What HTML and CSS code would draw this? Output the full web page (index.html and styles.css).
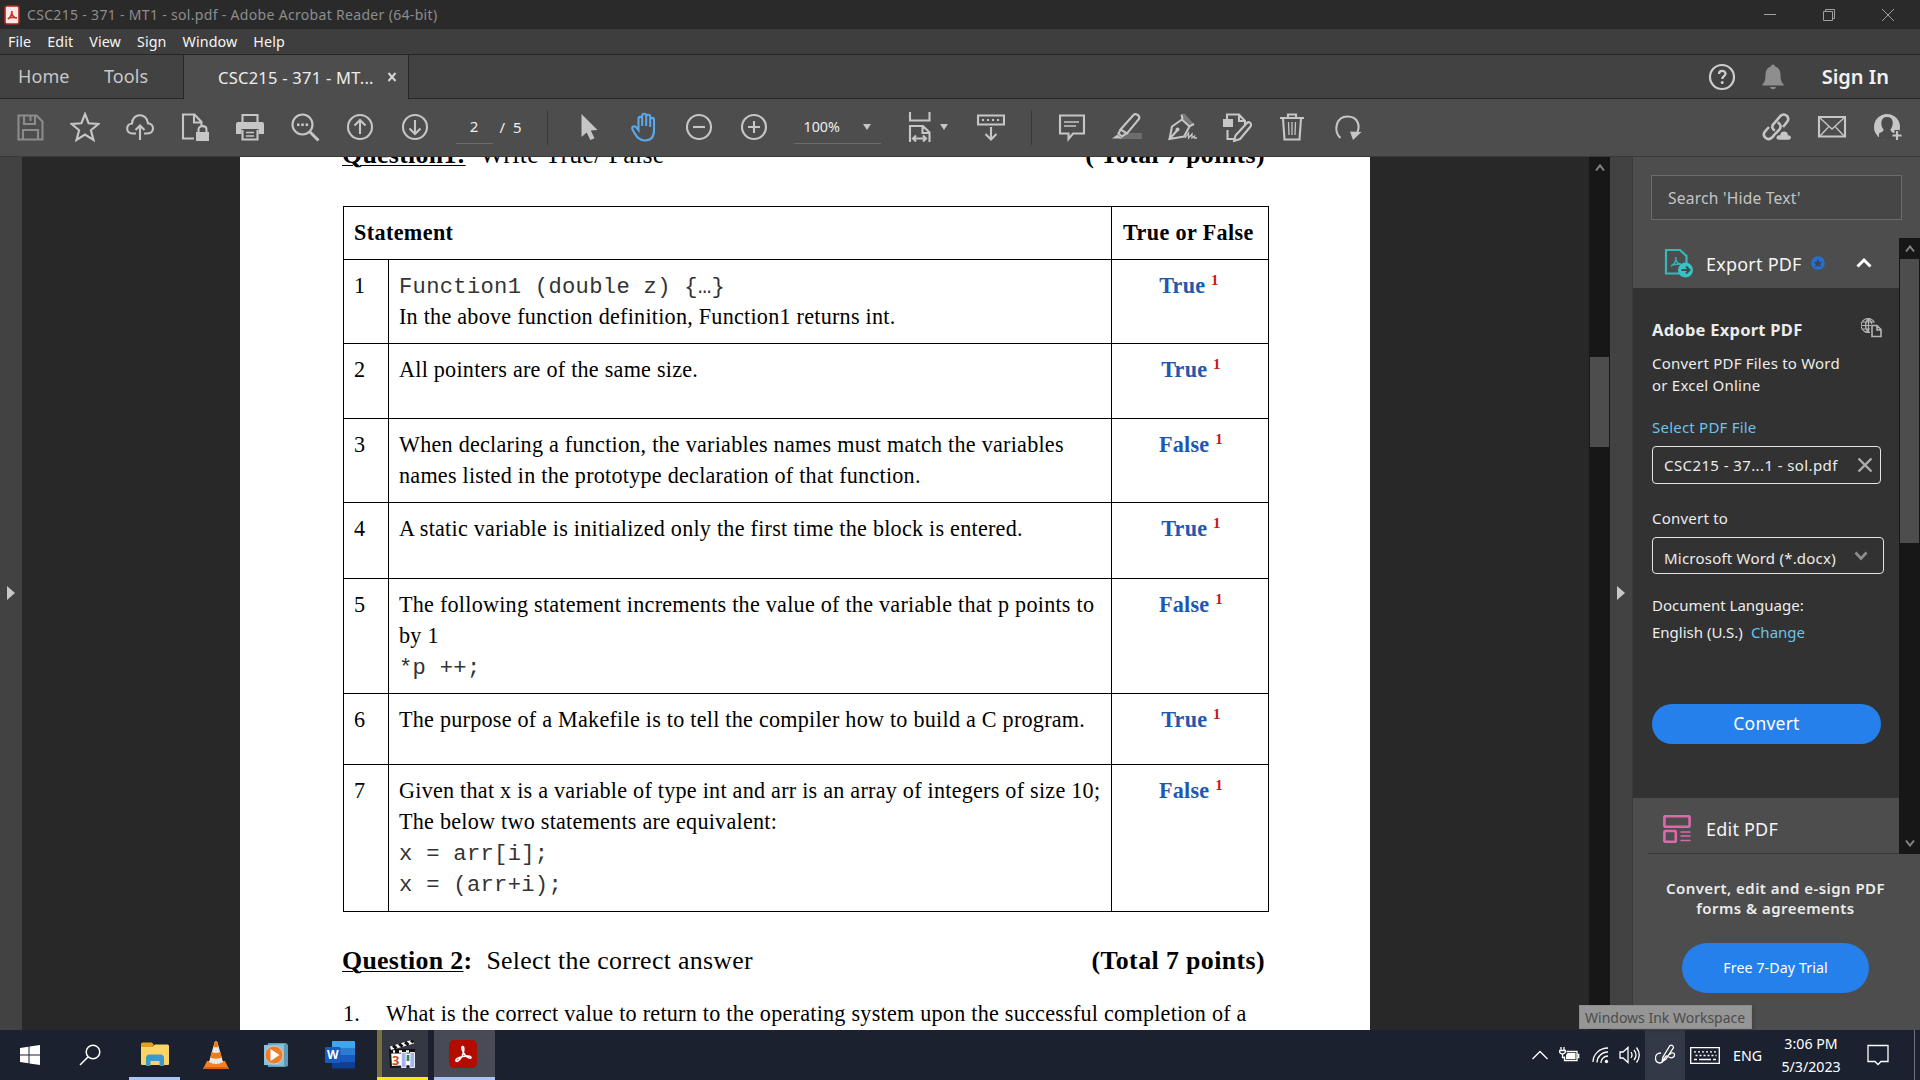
FILE: index.html
```html
<!DOCTYPE html>
<html lang="en">
<head>
<meta charset="utf-8">
<title>CSC215 - 371 - MT1 - sol.pdf - Adobe Acrobat Reader (64-bit)</title>
<link rel="stylesheet" href="styles.css">
</head>
<body>
<div class="screen">
  <header class="titlebar">
    <svg class="app-icon" width="16" height="20" viewBox="0 0 16 20"><rect x="1" y="1" width="14" height="18" rx="2" fill="#fbe9e7" stroke="#b3261e" stroke-width="1.6"/><path d="M4 14c3-2 4-5 4-8M8 9c1 3 2 4 5 4M4 14c2-2 5-2 9-1" fill="none" stroke="#c8352c" stroke-width="1.7"/></svg>
    <span class="title-text">CSC215 - 371 - MT1 - sol.pdf - Adobe Acrobat Reader (64-bit)</span>
    <div class="window-buttons">
      <svg width="14" height="14" viewBox="0 0 14 14"><path d="M1 6.5h12"/></svg>
      <svg width="14" height="14" viewBox="0 0 14 14"><path d="M1.5 3.5h9v9h-9zM3.5 3V1.500h9v9H11"/></svg>
      <svg width="14" height="14" viewBox="0 0 14 14"><path d="M1 1l12 12M13 1L1 13"/></svg>
    </div>
  </header>

  <nav class="menubar"><span>File</span><span>Edit</span><span>View</span><span>Sign</span><span>Window</span><span>Help</span></nav>

  <div class="tabbar">
    <span class="nav-tab home">Home</span>
    <span class="nav-tab tools">Tools</span>
    <div class="doc-tab"><span class="doc-name">CSC215 - 371 - MT...</span>
      <svg width="10" height="10" viewBox="0 0 10 10"><path d="M1.500 1l7 8M8.500 1l-7 8" stroke="#d5d5d5" stroke-width="2"/></svg>
    </div>
    <div class="account">
      <svg width="28" height="28" viewBox="0 0 28 28"><circle cx="14" cy="14" r="12" fill="none" stroke="#cdcdcd" stroke-width="2.2"/><path d="M11 11c0-4 6.500-4 6.500-.3 0 2.300-3.200 2.500-3.200 5.300" fill="none" stroke="#cdcdcd" stroke-width="2.300"/><circle cx="14.200" cy="19.500" r="1.500" fill="#cdcdcd"/></svg>
      <svg class="bell" width="24" height="28" viewBox="0 0 24 28"><path d="M10 3.500c0-2.700 4-2.700 4 0 4 1 5.500 4.500 5.500 8.500 0 5 1 7.500 3 9v1.500h-21V21c2-1.500 3-4 3-9 0-4 1.500-7.500 5.500-8.500zM9 24h6c-.5 3-5.500 3-6 0z" fill="#8e8e8e"/></svg>
      <span class="sign-in">Sign In</span>
    </div>
  </div>

  <div class="toolbar">
    <div class="slots">
      <svg class="dim" viewBox="0 0 30 30"><path d="M3.500 3.500h18l6 6v18h-24zM9 4v8h11V4M15.500 4v5M8 27V18h15v9"/></svg>
      <svg viewBox="0 0 30 30"><path d="M15 2l3.600 9.200 9.900.7-7.600 6.400 2.600 9.700L15 22.600 6.500 28l2.600-9.700-7.600-6.400 9.900-.7z"/></svg>
      <svg viewBox="0 0 30 30"><path d="M11 21.500H7.500c-7 0-7-9.500-.5-10C7.500 .5 22 .5 23 11.200c7 .8 6.500 10.300-.5 10.300H19M15 28V14M10.500 18L15 13.500l4.500 4.500"/></svg>
      <svg viewBox="0 0 30 30"><path d="M14 26.500H3v-24h11.500l7 7.500v4M14 3v7.500h7"/><path class="fill" d="M16 20h13v9H16z"/><path d="M18.500 20v-2.500c0-4.500 8-4.500 8 0V20"/></svg>
      <svg viewBox="0 0 30 30"><path d="M7.500 10V3h15v7M7.500 18v9.500h15V18"/><path class="fill" d="M3 10h24q2 0 2 2v10h-5.500v-5h-17v5H1V12q0-2 2-2z"/><path d="M11 20.500h8M11 24h8" class="thin"/></svg>
      <svg viewBox="0 0 30 30"><circle cx="12.500" cy="12.500" r="10"/><path d="M20 20l8.500 8.500" class="thick"/><path class="fill" d="M7 11.500h2.500V14H7zM11.300 11.500h2.500V14h-2.500zM15.600 11.500h2.500V14h-2.500z"/></svg>
      <svg viewBox="0 0 30 30"><circle cx="15" cy="15" r="12"/><path d="M15 22V9M9.500 13.500L15 8l5.500 5.500"/></svg>
      <svg viewBox="0 0 30 30"><circle cx="15" cy="15" r="12"/><path d="M15 8v13M9.500 16.500L15 22l5.500-5.500"/></svg>
    </div>
    <div class="page-box">2</div>
    <span class="page-total">/&nbsp; 5</span>
    <i class="sep sep-a"></i>
    <div class="slots slots-b">
      <svg viewBox="0 0 30 30"><path class="fill" d="M7.500 2v23l5.200-4.500 3.600 7.500 4.200-1.800-3.700-7.600 6.700-.6z"/></svg>
      <svg class="blue" viewBox="0 0 30 30"><path d="M8 18V7c0-2.800 3.700-2.800 3.700 0v7V4c0-3 4-3 4 0v10V5c0-3 4-3 4 0v10V8c0-2.800 3.800-2.800 3.800 0v10c0 7-3.500 10.500-9 10.500-6 0-8.500-3.500-12.500-11C.8 14.800 4 13 6 15.500z" transform="translate(1.500 0)"/></svg>
      <svg viewBox="0 0 30 30"><circle cx="15" cy="15" r="12"/><path d="M9 15h12"/></svg>
      <svg viewBox="0 0 30 30"><circle cx="15" cy="15" r="12"/><path d="M9 15h12M15 9v12"/></svg>
    </div>
    <div class="zoom-box"><span>100%</span><i class="caret"></i></div>
    <div class="fit">
      <svg viewBox="0 0 30 30"><path d="M5 0v8.500h19.500V0M5 30V14h13l6.500 6.500V30M17.500 14.500v6.500h7M8 26.500h13M11 23.500l-3 3 3 3M18 23.500l3 3-3 3"/></svg><i class="caret"></i>
    </div>
    <svg class="scroll-mode" viewBox="0 0 30 30"><path d="M2 3.500h26v9H2zM15 15v12M9.500 22l5.500 5.500 5.500-5.500"/><path class="dots" d="M6 8h18"/></svg>
    <i class="sep sep-b"></i>
    <div class="slots slots-c">
      <svg viewBox="0 0 30 30"><path d="M3 3.500h24v18H16l-4.500 5.500v-5.500H3z"/><path class="thin" d="M7 10h15M7 14h12"/></svg>
      <svg viewBox="0 0 30 30"><path fill="#6d6d6d" stroke="none" d="M11 21h19v6H7z"/><path d="M8.500 17.500L21.500 3c2-2 7 .5 5.500 4L15 21.500zM9 17l-2.500 4.500 3.500 3 5-3.500"/><path class="fill" d="M5.500 22.500l4.500 4H0z"/></svg>
      <svg viewBox="0 0 30 30"><path fill="#7a7a7a" stroke="none" d="M17 1l9 10-3 2-9-8z"/><path d="M2.500 27L5 14.500 15 7.500l7.500 7L17 24.500zM3 26.500l7-8M14.500 2.500l1 5M27 12l-5 2.500"/><circle class="fill" cx="10.500" cy="17.500" r="2"/><path d="M18 26l3.500-5v5l3.500-4v4l2.500-2v2H30" class="thin"/></svg>
      <svg viewBox="0 0 30 30"><path class="fill" d="M1 7h10v8H1z"/><path d="M5 7V2.500h12l6 6.500v4M17 3v6h6M5.500 18v9H12M13.500 23.500L25 11c2-2 5.500.8 3.500 3.500L18 27l-6 2z"/></svg>
      <svg viewBox="0 0 30 30"><path d="M3 6h24M11 5V2.500h8V5M6 6.500l1.500 21h15L24 6.500"/><path class="thin" d="M11.500 10l.5 13M15 10v13M18.500 10l-.5 13"/></svg>
      <svg viewBox="0 0 30 30"><path d="M8.500 26C1 19 4 4.500 15.500 4.500 26 4.500 29 14 24.500 22"/><path class="fill" d="M18 19.500l11.500.5L21 28z"/></svg>
    </div>
    <div class="slots slots-d">
      <svg viewBox="0 0 30 30"><path d="M14 18.500c-3-1-3.500-4.500-1.500-6.500l7-8c4-4 10.500 1.500 6.500 6l-4 5M16.500 10.500c3 1 4 4.500 2 7l-7.500 8c-4.500 4-10.500-1.500-7-6l4-4.500" stroke-width="2.600"/><path class="fill halo" d="M18 28.500c-5 0-4-6.500.5-6 1-5 8.500-5 9 0 4.500.5 4 6 0 6z"/></svg>
      <svg viewBox="0 0 30 30"><path d="M2 5h26v19.500H2z"/><path class="thin" d="M3 6l12 11L27 6M3 24l8.500-9M27 24l-8.500-9"/></svg>
      <svg viewBox="0 0 30 30"><circle class="fill" cx="15" cy="15" r="13"/><path fill="#4b4b4b" stroke="none" d="M15 5c7 0 7 8 3.500 12.500 0 2.500 2 3 4.500 4v5.500c-3 1.500-11 1.500-16-.5v-5c3-2 4.500-1.500 4.500-4C8 13 8.500 5 15 5z"/><path d="M25 18v11M20 23.500h10" class="cross-bg"/><path d="M25 19v9M20.500 23.500h9"/></svg>
    </div>
  </div>

  <main class="workspace">
    <div class="left-rail"><i class="tri"></i></div>
    <div class="canvas">
      <article class="page">
        <h2 class="q q1"><span><u>Question1:</u><em>Write True/ False</em></span><span class="total">( Total 7 points)</span></h2>
        <div class="grid">
          <div class="cell head wide">Statement</div><div class="cell head ans-head">True or False</div>
          <div class="cell">1</div><div class="cell"><code>Function1 (double z) {…}</code><br>In the above function definition, Function1 returns int.</div><div class="cell ans first">True <sup>1</sup></div>
          <div class="cell">2</div><div class="cell">All pointers are of the same size.</div><div class="cell ans">True <sup>1</sup></div>
          <div class="cell">3</div><div class="cell">When declaring a function, the variables names must match the variables<br>names listed in the prototype declaration of that function.</div><div class="cell ans">False <sup>1</sup></div>
          <div class="cell">4</div><div class="cell">A static variable is initialized only the first time the block is entered.</div><div class="cell ans">True <sup>1</sup></div>
          <div class="cell">5</div><div class="cell">The following statement increments the value of the variable that p points to<br>by 1<br><code>*p ++;</code></div><div class="cell ans">False <sup>1</sup></div>
          <div class="cell">6</div><div class="cell">The purpose of a Makefile is to tell the compiler how to build a C program.</div><div class="cell ans">True <sup>1</sup></div>
          <div class="cell">7</div><div class="cell">Given that x is a variable of type int and arr is an array of integers of size 10;<br>The below two statements are equivalent:<br><code>x = arr[i];</code><br><code>x = (arr+i);</code></div><div class="cell ans">False <sup>1</sup></div>
        </div>
        <h2 class="q q2"><span><u>Question 2</u>:<em>Select the correct answer</em></span><span class="total">(Total 7 points)</span></h2>
        <div class="item"><span class="num">1.</span><span>What is the correct value to return to the operating system upon the successful completion of a</span></div>
      </article>
    </div>
    <div class="scrollbar doc-scroll">
      <svg width="10" height="8" viewBox="0 0 10 8"><path d="M1 6.500l4-5 4 5"/></svg>
      <i class="thumb"></i>
      <svg width="10" height="8" viewBox="0 0 10 8"><path d="M1 1.500l4 5 4-5"/></svg>
    </div>
    <div class="right-rail"><i class="tri"></i></div>
    <aside class="panel">
      <div class="search">Search 'Hide Text'</div>
      <div class="tools-area">
        <div class="tool-list">
          <div class="tool-head">
            <svg width="30" height="30" viewBox="0 0 30 30"><path d="M16 25.500H2V2h14l6.500 6v7" fill="none" stroke="#35b8ba" stroke-width="2.200"/><path d="M7 18c4-2 5-6 5-9M12 12c1 3 2 4 5 4M7 18c2-2 5-2 10-2" fill="none" stroke="#35b8ba" stroke-width="1.300"/><circle cx="21.500" cy="22" r="7.500" fill="#35c4c4"/><path d="M17.500 22h7M22 18.500l3.500 3.500-3.500 3.500" fill="none" stroke="#35504f" stroke-width="2"/></svg>
            <span class="tool-name export">Export PDF</span>
            <svg width="14" height="14" viewBox="0 0 14 14"><circle cx="7" cy="7" r="6.800" fill="#2470d8"/><path d="M7 2.500l1.300 3.200 3.400.2-2.600 2.200.9 3.300L7 9.600l-3 1.800.9-3.300L2.300 5.900l3.400-.2z" fill="#3f4650"/></svg>
            <svg class="fold" width="16" height="12" viewBox="0 0 16 12"><path d="M1.500 9.500L8 3l6.500 6.500" fill="none" stroke="#fff" stroke-width="3"/></svg>
          </div>
          <section class="export-body">
            <div class="title-row"><b>Adobe Export PDF</b>
              <svg width="21" height="20" viewBox="0 0 21 20" fill="none" stroke="#b4b4b4" stroke-width="1.200"><path d="M13.500 4.500A7 7 0 1 0 9 14.200M7.500 1c-4 3-4 10 0 13M7.500 1v13M7.500 1c2 1 3 3 3.300 5M1 7.500h9M2 4h11M2 11h7"/><path d="M11 7.500h5l4 4v7h-9zM16 8v4h4" stroke-width="1.600" fill="#323232"/></svg></div>
            <p class="desc">Convert PDF Files to Word<br>or Excel Online</p>
            <a class="link select-link">Select PDF File</a>
            <div class="field file"><span>CSC215 - 37...1 - sol.pdf</span><svg width="16" height="16" viewBox="0 0 16 16"><path d="M1.500 1.500l13 13M14.500 1.500l-13 13" stroke="#adadad" stroke-width="2.400"/></svg></div>
            <label class="convert-to">Convert to</label>
            <div class="field format"><span>Microsoft Word (*.docx)</span><svg width="14" height="10" viewBox="0 0 14 10"><path d="M1.500 1.500L7 7.500l5.500-6" fill="none" stroke="#8e8e8e" stroke-width="2.600"/></svg></div>
            <p class="lang">Document Language:</p>
            <p class="lang2">English (U.S.)<a class="link">Change</a></p>
            <div class="button convert">Convert</div>
          </section>
          <div class="tool-head edit">
            <svg width="28" height="28" viewBox="0 0 28 28" fill="none" stroke="#dd69ab" stroke-width="2.600"><rect x="1.400" y="1.200" width="25.200" height="10.600" rx="1"/><rect x="1.400" y="16" width="11.400" height="10.800" rx="1"/><path d="M17.500 17h10M17.500 21h10M17.500 25.500h10" stroke-width="1.300"/></svg>
            <span class="tool-name">Edit PDF</span>
          </div>
        </div>
        <div class="scrollbar panel-scroll">
          <svg width="10" height="8" viewBox="0 0 10 8"><path d="M1 6.500l4-5 4 5"/></svg>
          <i class="thumb"></i>
          <svg width="10" height="8" viewBox="0 0 10 8"><path d="M1 1.500l4 5 4-5"/></svg>
        </div>
      </div>
      <div class="promo">
        <p>Convert, edit and e-sign PDF<br>forms &amp; agreements</p>
        <div class="button trial">Free 7-Day Trial</div>
      </div>
    </aside>
  </main>

  <footer class="taskbar">
    <div class="tb start"><svg width="20" height="20" viewBox="0 0 20 20" fill="#fff"><path d="M0 3l8.500-1.200v7.700H0zM9.500 1.600L20 0v9.500H9.500zM0 10.500h8.500v7.800L0 17zM9.500 10.500H20V20L9.500 18.500z"/></svg></div>
    <div class="tb find"><svg width="22" height="22" viewBox="0 0 22 22" fill="none" stroke="#fff" stroke-width="1.500"><circle cx="14" cy="8" r="6.800"/><path d="M9.200 12.800L1 21"/></svg></div>
    <div class="tb explorer"><svg width="28" height="24" viewBox="0 0 28 24"><path d="M0 2q0-1.500 1.500-1.500H11l2 2.500-2 2H0z" fill="#e0a11f"/><path d="M0 5h11l3-2.500h12.500Q28 2.500 28 4v18q0 1-1 1H1q-1 0-1-1z" fill="#fbd667"/><path d="M5 24v-8q0-3.500 3.500-3.500h11Q23 12.500 23 16v8h-4.500v-5h-9v5z" fill="#3f97cb"/></svg></div>
    <div class="tb vlc"><svg width="26" height="28" viewBox="0 0 26 28"><path d="M4 20h18l4 8H0z" fill="#f5821f"/><path d="M13 0q1 0 1.500 1.500L20 21q-7 4-14 0L11.500 1.500Q12 0 13 0z" fill="#e9e9e9"/><path d="M13 0q1 0 1.500 1.500l1.200 4.200q-2.700 1-5.400 0l1.200-4.200Q12 0 13 0zM8.800 11q4.200 2 8.400 0l1.500 5.500q-5.700 2.500-11.400 0z" fill="#ef7d14"/><path d="M0 28l1-2h24l1 2z" fill="#d95f0b"/></svg></div>
    <div class="tb wmp"><svg width="26" height="26" viewBox="0 0 26 26"><path d="M5 1h18l2 2v21l-3 1H5z" fill="#5e9ab5"/><path d="M1 3l20-1v22L1 23z" fill="#85c2dc"/><circle cx="11" cy="13" r="9" fill="#ee7d2b" stroke="#e8d2c0" stroke-width=".8"/><path d="M7.500 7l9 6-9 6z" fill="#fff"/></svg></div>
    <div class="tb word"><svg width="30" height="28" viewBox="0 0 30 28"><path d="M7 1q0-1 1-1h21q1 0 1 1v6.500H7z" fill="#41a5ee"/><path d="M7 7h23v7H7z" fill="#2b7cd3"/><path d="M7 14h23v7H7z" fill="#185abd"/><path d="M7 21h23v5.500q0 1-1 1H8q-1 0-1-1z" fill="#103f91"/><rect y="6" width="15.500" height="16" rx="1.200" fill="#185abd"/><text x="7.700" y="18" text-anchor="middle" class="word-letter">W</text></svg></div>
    <div class="tb clapper"><svg width="30" height="32" viewBox="0 0 30 32"><path d="M2 12h24l-2 16-21 1z" fill="#fff" stroke="#111" stroke-width="2"/><path d="M2 8.500L25 1.500l1 4L3 12z" fill="#fff"/><path d="M5 7.500l3.500 3M11 5.700l3.500 3M17 4l3.500 3M23 2l2.500 2.500" stroke="#111" stroke-width="3"/><path d="M2 12h25v3.500H2z" fill="#111"/><path d="M5 13.500h2M11 13.500h3M18 13.500h3" stroke="#fff" stroke-width="2.500"/><text x="4" y="27" class="reel">3</text><path d="M20 17v6" stroke="#288a38" stroke-width="3"/><path d="M13.500 14.500h4.500v15h-4.500zM22 14.500h4.500v15H22z" fill="#a5b4ee" stroke="#e6e9ff"/></svg></div>
    <div class="tb acrobat"><svg width="28" height="28" viewBox="0 0 28 28"><rect width="28" height="28" rx="5" fill="#b30b00"/><path d="M13.500 15.500C12 18.500 8.500 22.500 7 21c-1.200-1.800 4-4 6.500-4.500 4-.8 8.500-.8 8.500 1 0 2-4-.2-6-2.500-2.500-2.800-4-8-2.500-8.500 2-.5 1.500 5.500 0 9z" fill="none" stroke="#fff" stroke-width="1.600"/></svg></div>
    <div class="tray">
      <svg class="up" width="18" height="10" viewBox="0 0 18 10"><path d="M1.500 9L9 1.500 16.500 9"/></svg>
      <svg class="battery" width="21" height="16" viewBox="0 0 21 16"><path d="M7.500 4.500h10.500v9H5.500V9.500M18 7.500h1.700v3H18M2 0v3M5 0v3M.7 3.500h5.600v2q-2.800 3-5.600 0zM3.500 7v3.500h2" stroke-width="1"/><path d="M8.500 6h8v6H7V8z" class="charge"/></svg>
      <svg class="wifi" width="17" height="17" viewBox="0 0 17 17"><path d="M1 15C1 8 7 1 16 1M5 15.500C5 10 9.500 5 16 5M9 16c0-4 3-7 7-7"/><circle cx="14.500" cy="14.500" r="1.700" fill="#fff" stroke="none"/></svg>
      <svg class="sound" width="21" height="18" viewBox="0 0 21 18"><path d="M1 6h3l5-4.500v15L4 12H1zM12 6q2 3 0 6M15 4q4 5 0 10M17.500 1.500q5.500 7.500 0 15"/></svg>
      <div class="ink"><svg width="22" height="22" viewBox="0 0 22 22"><path d="M8 18l1-5 7-11.500q3-1 3.500 2L12 15zM7 9c-4 0-6 2.500-5.500 6 .5 4.500 6 5.500 8 1.500 2-5 3-5.500 5.500-3.500 3 2 5.500 0 5.500-2.500 0-2-3-2.500-5 0"/></svg></div>
      <svg class="keyboard" width="30" height="17" viewBox="0 0 30 17"><path d="M.700 .7h28.600v15.600H.7z"/><path d="M4 4.800h23M5.500 8.500h21" stroke-dasharray="2 2"/><path d="M4 12.500h3M9 12.500h12M23 12.500h3"/></svg>
      <span class="eng">ENG</span>
      <div class="clock">3:06 PM<br>5/3/2023</div>
      <svg class="notice" width="22" height="22" viewBox="0 0 22 22"><path d="M1 1.500h20v16h-7l-3 3-3-3H1z"/></svg>
      <i class="peek"></i>
    </div>
  </footer>
  <div class="tooltip">Windows Ink Workspace</div>
</div>
</body>
</html>
```
FILE: styles.css
```css
* { box-sizing: border-box; }
body { margin: 0; background: #262626; font-family: "Noto Sans", sans-serif; overflow: hidden; }
p, h2 { margin: 0; }
svg { display: block; flex: none; }
.screen { position: relative; width: 1920px; height: 1080px; display: flex; flex-direction: column; }

.titlebar { height: 29px; background: #2a2a2a; display: flex; align-items: center; padding-left: 4px; color: #8d8d8d; font-size: 14px; }
.title-text { margin-left: 7px; white-space: nowrap; letter-spacing: .32px; }
.window-buttons { margin-left: auto; display: flex; gap: 45px; padding-right: 25px; }
.window-buttons path { fill: none; stroke: #a0a0a0; stroke-width: 1; }

.menubar { height: 26px; background: #3e3e3e; border-bottom: 1px solid #262626; display: flex; gap: 16px; padding-left: 8px; color: #f5f5f5; font-size: 14.300px; letter-spacing: .1px; line-height: 25px; }

.tabbar { height: 44px; background: #424242; display: flex; color: #c8c8c8; box-shadow: inset 0 -1px #262626; }
.nav-tab { font-size: 18px; letter-spacing: .1px; line-height: 43px; }
.home { width: 86px; padding-left: 18px; }
.tools { width: 97px; padding-left: 18px; }
.doc-tab { width: 226px; background: #4d4d4d; border-left: 1px solid #262626; border-right: 1px solid #262626; display: flex; align-items: center; padding-left: 34px; gap: 14px; color: #ededed; font-size: 16.500px; letter-spacing: .25px; }
.doc-name { width: 155px; white-space: nowrap; }
.account { margin-left: auto; display: flex; align-items: center; padding-right: 31px; }
.bell { margin-left: 25px; }
.sign-in { margin-left: 37px; font-size: 20px; font-weight: 600; line-height: 44px; color: #f2f2f2; }

.toolbar { height: 58px; background: #4d4d4d; border-bottom: 1px solid #393939; display: flex; align-items: center; padding-left: 3px; padding-bottom: 1px; color: #ededed; font-size: 15px; }
.toolbar svg { width: 30px; height: 30px; fill: none; stroke: #c6c6c6; stroke-width: 2.100; }
.toolbar .fill { fill: #c6c6c6; stroke: none; }
.toolbar .thin { stroke-width: 1.300; }
.toolbar .thick { stroke-width: 3; }
.toolbar .dots { stroke-width: 2; stroke-dasharray: 2 3; }
.toolbar .halo { stroke: #4d4d4d; stroke-width: 1.500; }
.toolbar .cross-bg { stroke: #4d4d4d; stroke-width: 5; }
.toolbar .dim { stroke: #8b8b8b; }
.toolbar .blue { stroke: #5ba7ee; }
.slots { display: flex; gap: 25px; padding-left: 12px; }
.page-box { width: 37px; height: 34px; margin-left: 25.500px; border-bottom: 1px solid #6b6b6b; text-align: center; line-height: 33px; }
.page-total { margin-left: 7px; width: 30px; white-space: nowrap; }
.sep { width: 1px; height: 35px; background: #393939; }
.sep-a { margin-left: 17px; }
.slots-b { padding-left: 26px; }
.zoom-box { width: 87px; height: 34px; margin-left: 25px; border-bottom: 1px solid #6b6b6b; display: flex; align-items: center; justify-content: space-between; padding: 0 10px; font-size: 14.300px; }
.caret { width: 0; height: 0; border: 4px solid transparent; border-top: 6px solid #c6c6c6; border-bottom: 0; }
.fit { margin-left: 24px; display: flex; align-items: center; gap: 5px; }
.scroll-mode { margin-left: 28px; }
.sep-b { margin-left: 25px; }
.slots-c { padding-left: 25px; }
.slots-d { margin-left: auto; gap: 25.500px; padding-right: 18px; }

.workspace { height: 873px; display: grid; grid-template-columns: 22px 1567px 21px 22px 288px; overflow: hidden; }
.left-rail, .right-rail { background: #424242; padding-top: 429px; }
.tri { display: block; width: 0; height: 0; border: 7px solid transparent; border-left: 8px solid #c8c8c8; border-right: 0; margin-left: 7px; }
.canvas { background: #282828; padding-left: 218px; height: 873px; overflow: hidden; }
.page { width: 1130px; height: 873px; overflow: hidden; background: #fff; padding-left: 103px; color: #000; font-family: "Liberation Serif", serif; font-size: 22.150px; letter-spacing: .245px; line-height: 31px; white-space: nowrap; }
.q { width: 922px; display: flex; justify-content: space-between; font-size: 25.850px; letter-spacing: .3px; line-height: 30px; font-weight: bold; }
.q > span:first-child { margin-left: -1px; }
.q u { text-decoration-thickness: 1px; text-underline-offset: 2px; }
.q em { font-style: normal; font-weight: normal; margin-left: 14px; }
.total { letter-spacing: .4px; }
.q1 { margin-top: -17px; }
.q2 { margin-top: 34px; }
.grid { width: 926px; height: 706px; margin-top: 36px; display: grid; grid-template-columns: 45px 723px 157px; grid-template-rows: 53px 84px 75px 84px 76px 115px 71px 147px; border-right: 1px solid #000; border-bottom: 1px solid #000; }
.cell { border-left: 1px solid #000; border-top: 1px solid #000; padding: 10px 0 0 10px; }
.wide { grid-column: span 2; }
.head { font-weight: bold; letter-spacing: .38px; }
.ans-head { padding-left: 11px; }
.ans { padding-left: 2px; text-align: center; font-weight: bold; color: #2058b0; }
.ans sup { color: #c8141e; font-size: 15px; line-height: 0; vertical-align: 8.500px; }
.first { padding-left: 0; padding-right: 2px; }
.cell code { font-family: "Liberation Mono", monospace; font-size: 22.150px; letter-spacing: .3px; line-height: 0; color: #333; }
.item { margin-top: 22px; display: flex; }
.num { width: 43px; }

.scrollbar { background: #171717; display: flex; flex-direction: column; align-items: center; }
.scrollbar path { fill: none; stroke: #858585; stroke-width: 2; }
.scrollbar .thumb { width: 19px; background: #4d4d4d; }
.scrollbar svg:last-child { margin-top: auto; }
.doc-scroll { padding: 7px 0 8px; }
.doc-scroll .thumb { height: 90px; margin-top: 185px; }

.panel { background: #4d4d4d; border-left: 1px solid #3a3a3a; color: #ececec; font-size: 15px; letter-spacing: .22px; }
.search { width: 251px; height: 45px; margin: 18px 0 18px 18px; border: 1px solid #6b6b6b; background: #464646; color: #c4c4c4; padding-left: 16px; font-size: 15.600px; line-height: 44px; }
.tools-area { display: flex; height: 616px; }
.tool-list { width: 266px; }
.tool-head { height: 50px; display: flex; align-items: center; padding-left: 31px; }
.tool-name { color: #f5f5f5; font-size: 18px; }
.export { margin: 2px 9px 0 12px; }
.fold { margin-left: 31px; }
.export-body { height: 510px; background: #323232; padding: 30px 0 0 19px; line-height: 22px; white-space: nowrap; }
.title-row { height: 24px; display: flex; align-items: center; justify-content: space-between; padding-right: 17px; font-size: 16.500px; letter-spacing: .25px; }
.title-row svg { margin-top: -4px; }
.desc { margin-top: 10px; }
.link { color: #6cc3ea; }
.select-link { display: block; margin-top: 20px; }
.field { border: 1px solid #e4e4e4; border-radius: 4px; display: flex; align-items: center; justify-content: space-between; padding-left: 11px; }
.file { width: 229px; height: 38px; margin-top: 8px; padding-right: 7px; }
.file span { letter-spacing: .4px; }
.convert-to { display: block; margin-top: 23px; }
.format { width: 232px; height: 37px; margin-top: 8px; padding-right: 15px; }
.format span { padding-top: 4px; }
.lang { margin-top: 20px; letter-spacing: 0; }
.lang2 { margin-top: 5px; letter-spacing: 0; }
.lang2 a { margin-left: 8px; }
.button { background: #2680eb; color: #fff; text-align: center; }
.convert { width: 229px; height: 40px; margin-top: 61px; border-radius: 20px; font-size: 17.500px; line-height: 39px; }
.edit { height: 56px; padding-top: 6px; margin-left: 15px; padding-left: 15px; gap: 15px; border-bottom: 1px solid #393939; }
.panel-scroll { width: 21px; padding: 7px 0; }
.panel-scroll .thumb { height: 284px; margin-top: 6px; }
.promo { display: flex; flex-direction: column; align-items: center; padding: 24px 2px 0 0; font-weight: 600; line-height: 20px; text-align: center; letter-spacing: .45px; }
.trial { width: 187px; height: 50px; margin-top: 25px; border-radius: 25px; font-weight: normal; font-size: 14.200px; letter-spacing: .1px; line-height: 49px; }

.taskbar { height: 50px; background: #1b212f; display: flex; color: #fff; }
.tb { height: 50px; display: flex; align-items: center; justify-content: center; flex: none; }
.start { width: 60px; }
.find { width: 60px; }
.explorer { width: 51px; margin-left: 9px; border-bottom: 3px solid #a9c4f5; }
.vlc { width: 60px; margin-left: 6px; }
.wmp { width: 60px; margin-left: 0; }
.word { width: 60px; margin-left: 4px; }
.clapper { width: 51px; margin-left: 7px; background: linear-gradient(90deg, #77713b 5px, #343843 5px); border-bottom: 3px solid #f7ea1c; }
.acrobat { width: 61px; margin-left: 6px; background: #484b56; border-bottom: 3px solid #a9c4f5; }
.acrobat svg { margin: 0 3px 0 0; }
.word-letter { font: bold 12px "Noto Sans", sans-serif; fill: #fff; }
.reel { font: bold 13px "Noto Sans", sans-serif; fill: #c8501e; }
.tray { margin-left: auto; display: flex; align-items: center; font-size: 14.200px; padding-right: 5px; }
.tray path { fill: none; stroke: #fff; stroke-width: 1.300; }
.tray .charge { fill: #fff; stroke: none; }
.battery { margin-left: 10px; }
.wifi { margin-left: 12px; }
.sound { margin-left: 10px; }
.ink { margin-left: 5px; width: 40px; height: 50px; background: #343947; display: flex; align-items: center; justify-content: center; }
.keyboard { margin-left: 5px; }
.eng { margin-left: 13px; width: 30px; }
.clock { margin-left: 18px; width: 60px; text-align: center; line-height: 23px; white-space: nowrap; }
.notice { margin-left: 26px; }
.peek { width: 1px; height: 50px; margin-left: 25px; background: #6c717c; }
.tooltip { position: absolute; left: 1579px; top: 1005px; width: 173px; height: 24px; border: 1px solid #8c8c8c; background: #969696; color: #4c4c4c; font-size: 14px; line-height: 23px; padding-left: 5px; white-space: nowrap; box-shadow: 2px 2px 3px #3336; }
```
